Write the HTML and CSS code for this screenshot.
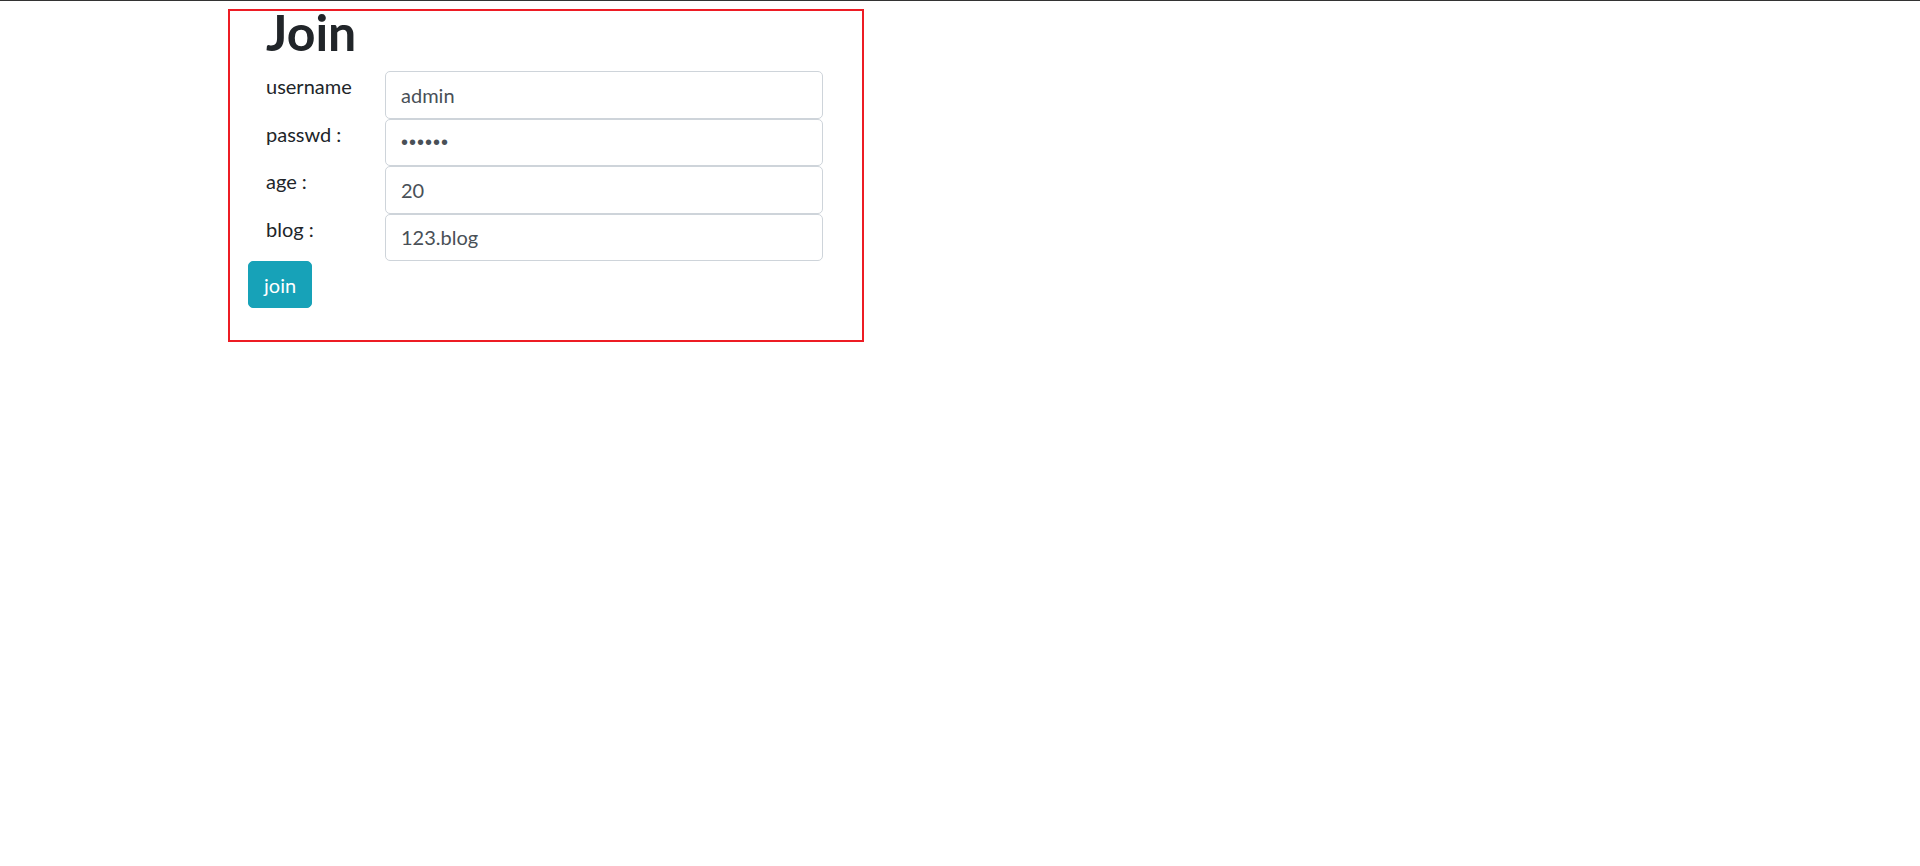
FILE: index.html
```html
<!DOCTYPE html>
<html lang="en">
<head>
<meta charset="utf-8">
<title>Join</title>
<link rel="stylesheet" href="styles.css">
</head>
<body>
<div class="topline"></div>
<form class="join-box">
  <h1 class="title">Join</h1>
  <div class="rows">
    <div class="row">
      <label class="lbl">username</label>
      <input class="field" type="text" value="admin">
    </div>
    <div class="row">
      <label class="lbl">passwd :</label>
      <input class="field field-pass" type="password" value="123456">
    </div>
    <div class="row">
      <label class="lbl">age :</label>
      <input class="field" type="text" value="20">
    </div>
    <div class="row">
      <label class="lbl">blog :</label>
      <input class="field" type="text" value="123.blog">
    </div>
  </div>
  <button class="btn" type="button">join</button>
</form>
</body>
</html>
```

FILE: styles.css
```css
html, body {
  margin: 0;
  padding: 0;
  background: #fff;
}

body {
  font-family: Lato, "Noto Sans", sans-serif;
  font-size: 20px;
  line-height: 30px;
  color: #212529;
}

.topline {
  height: 0;
  border-top: 1px solid #333;
}

.join-box {
  box-sizing: border-box;
  width: 636px;
  height: 333px;
  margin: 8px 0 0 228px;
  border: 2px solid #ed1c24;
  padding: 1px 0 0 18px;
}

.title {
  margin: 0 0 19px 18px;
  font-size: 50px;
  line-height: 40px;
  font-weight: 700;
  color: #212529;
}

.rows {
  display: flex;
  flex-direction: column;
  margin-left: 18px;
}

.row {
  display: flex;
  align-items: flex-start;
  height: 47.5px;
}

.lbl {
  width: 119px;
  flex: none;
}

.field {
  box-sizing: border-box;
  width: 438px;
  height: 47.5px;
  margin: 0;
  padding: 7.5px 15px;
  border: 1px solid #ced4da;
  border-radius: 5px;
  font-family: inherit;
  font-size: 20px;
  line-height: 30px;
  color: #495057;
  background: #fff;
  outline: none;
}

.field-pass {
  font-family: "Liberation Sans", sans-serif;
  letter-spacing: 1px;
}

.btn {
  display: block;
  box-sizing: border-box;
  height: 47px;
  width: 64px;
  margin: 0;
  padding: 7.5px 15px;
  border: 1px solid #17a2b8;
  border-radius: 5px;
  background: #17a2b8;
  color: #fff;
  font-family: inherit;
  font-size: 20px;
  line-height: 30px;
}
```
